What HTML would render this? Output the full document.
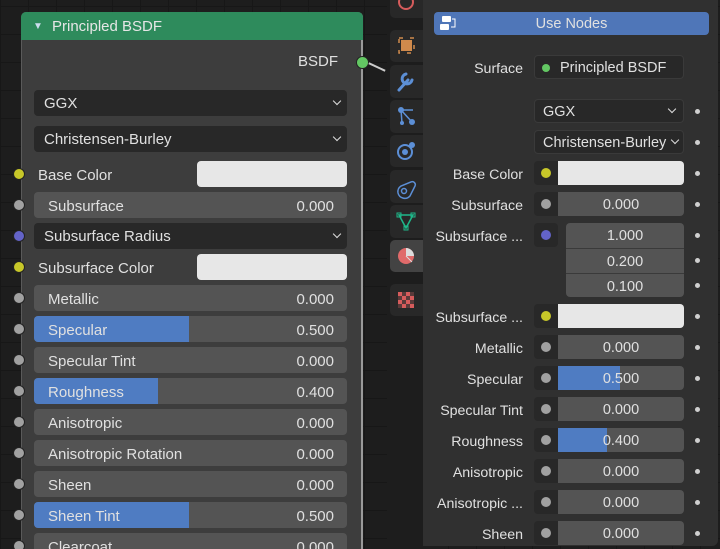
<!DOCTYPE html>
<html style="width:720px;height:549px;overflow:hidden"><head><meta charset="utf-8"><style>
*{box-sizing:border-box;margin:0;padding:0}
body{width:720px;height:549px;overflow:hidden;background:#1d1d1d;font-family:"Liberation Sans","DejaVu Sans",sans-serif;font-size:15px;color:#e0e0e0;position:relative;
background-image:linear-gradient(#171717 1px,transparent 1px),linear-gradient(90deg,#171717 1px,transparent 1px);background-size:28px 28px;background-position:0 6px}
.a{position:absolute}
.node{left:21px;top:12px;width:342px;height:545px;background:#3d3d3d;border-radius:5px;border:1px solid #5a5a5a;border-right:2px solid #9a9a9a}
.hdr{left:21px;top:12px;width:342px;height:28px;background:#2e8b5c;border-radius:5px 5px 0 0;color:#e6e6e6;padding-left:31px;padding-top:2px;line-height:26px;font-size:15px}
.f{position:absolute;left:34px;width:313px;height:26px;line-height:26px;background:#545454;border-radius:4px;overflow:hidden}
.f .bar{position:absolute;left:0;top:0;bottom:0;background:#4f7cc2}
.f .l{position:absolute;left:14px;top:2px}
.f .v{position:absolute;right:13px;top:2px}
.dd{position:absolute;left:34px;width:313px;height:26px;line-height:24px;padding-top:2px;background:#282828;border-radius:4px;padding-left:10px}
.chev{position:absolute;right:7px;top:8px;width:6px;height:6px;border-right:1.5px solid #ddd;border-bottom:1.5px solid #ddd;transform:rotate(45deg)}
.sk{position:absolute;left:13px;width:12px;height:12px;border-radius:50%;border:1px solid #222;background:#a1a1a1}
.strip{left:387px;top:0;width:36px;height:549px;background:#1d1d1d}
.tab{position:absolute;left:390px;width:33px;background:#282828;border-radius:5px 0 0 5px}
.panel{left:423px;top:0;width:295px;height:546px;background:#303030;border-radius:0 0 6px 0}
.lbl{position:absolute;right:197px;text-align:right;font-size:14.2px;white-space:nowrap;line-height:24px;padding-top:2px}
.sb{position:absolute;left:534px;width:24px;height:24px;background:#282828;border-radius:4px 0 0 4px}
.sb i{position:absolute;left:7px;top:7px;width:10px;height:10px;border-radius:50%;background:#a1a1a1}
.pf{position:absolute;left:558px;width:126px;height:24px;line-height:22px;padding-top:2px;background:#545454;border-radius:0 4px 4px 0;overflow:hidden;text-align:center;font-size:14.5px}
.pf .bar{position:absolute;left:0;top:0;bottom:0;background:#4f7cc2}
.pf span{position:relative}
.dot{position:absolute;left:695px;width:5px;height:5px;border-radius:50%;background:#cfcfcf}
.pdd{position:absolute;left:534px;width:150px;height:24px;line-height:20px;padding-top:2px;background:#282828;border-radius:4px;padding-left:8px;font-size:14.5px;border:1px solid #3a3a3a;white-space:nowrap;overflow:hidden}
</style></head><body>
<div class="a node"></div>
<div class="a hdr"><span style="position:absolute;left:12px;top:2px;font-size:10px;color:#cde">▼</span>Principled BSDF</div>
<div class="a" style="left:298px;top:53px">BSDF</div>
<div class="a" style="left:356px;top:56px;width:13px;height:13px;border-radius:50%;background:#63c763;border:1px solid #222"></div>
<div class="a" style="left:368px;top:66px;width:18px;height:2px;background:#ccc;transform:rotate(25deg)"></div>

<div class="dd" style="top:90px">GGX<div class="chev"></div></div>
<div class="dd" style="top:126px">Christensen-Burley<div class="chev"></div></div>
<div class="sk" style="top:168px;background:#c7c729"></div>
<div class="a" style="left:38px;top:163px;line-height:26px">Base Color</div>
<div class="a" style="left:197px;top:161px;width:150px;height:26px;background:#e7e7e7;border-radius:4px"></div>
<div class="sk" style="top:199px"></div><div class="f" style="top:192px"><span class="l">Subsurface</span><span class="v">0.000</span></div>
<div class="sk" style="top:230px;background:#6363c7"></div>
<div class="dd" style="top:223px">Subsurface Radius<div class="chev"></div></div>
<div class="sk" style="top:261px;background:#c7c729"></div>
<div class="a" style="left:38px;top:256px;line-height:26px">Subsurface Color</div>
<div class="a" style="left:197px;top:254px;width:150px;height:26px;background:#e7e7e7;border-radius:4px"></div>
<div class="sk" style="top:292px"></div><div class="f" style="top:285px"><span class="l">Metallic</span><span class="v">0.000</span></div>
<div class="sk" style="top:323px"></div><div class="f" style="top:316px"><div class="bar" style="width:155px"></div><span class="l">Specular</span><span class="v">0.500</span></div>
<div class="sk" style="top:354px"></div><div class="f" style="top:347px"><span class="l">Specular Tint</span><span class="v">0.000</span></div>
<div class="sk" style="top:385px"></div><div class="f" style="top:378px"><div class="bar" style="width:124px"></div><span class="l">Roughness</span><span class="v">0.400</span></div>
<div class="sk" style="top:416px"></div><div class="f" style="top:409px"><span class="l">Anisotropic</span><span class="v">0.000</span></div>
<div class="sk" style="top:447px"></div><div class="f" style="top:440px"><span class="l">Anisotropic Rotation</span><span class="v">0.000</span></div>
<div class="sk" style="top:478px"></div><div class="f" style="top:471px"><span class="l">Sheen</span><span class="v">0.000</span></div>
<div class="sk" style="top:509px"></div><div class="f" style="top:502px"><div class="bar" style="width:155px"></div><span class="l">Sheen Tint</span><span class="v">0.500</span></div>
<div class="sk" style="top:540px"></div><div class="f" style="top:533px"><span class="l">Clearcoat</span><span class="v">0.000</span></div>

<div class="a strip"></div>
<div class="tab" style="top:-5px;height:23px"></div>
<div class="tab" style="top:30px;height:32px"></div>
<div class="tab" style="top:65px;height:33px"></div>
<div class="tab" style="top:100px;height:33px"></div>
<div class="tab" style="top:135px;height:32px"></div>
<div class="tab" style="top:170px;height:33px"></div>
<div class="tab" style="top:205px;height:33px"></div>
<div class="tab" style="top:240px;height:32px;background:#434343"></div>
<div class="tab" style="top:284px;height:32px"></div>
<svg class="a" style="left:390px;top:0" width="33" height="320" viewBox="0 0 33 320" fill="none">
<circle cx="16" cy="2" r="7" stroke="#d65c5c" stroke-width="2"/>
<rect x="9" y="38" width="15" height="15" stroke="#d08a4c" stroke-width="1.5" stroke-dasharray="4 7"/><rect x="11" y="40" width="11" height="11" fill="#d08a4c"/>
<path d="M9 90 L18 80 M16 74 a5 5 0 1 0 6 6" stroke="#5c8fd6" stroke-width="3" stroke-linecap="round"/>
<circle cx="11" cy="110" r="3" fill="#5c8fd6"/><circle cx="12" cy="123" r="2" fill="#5c8fd6"/><circle cx="22" cy="122" r="3" fill="#5c8fd6"/><path d="M11 110 L12 123 M11 110 L22 122 M11 110 L23 110" stroke="#5c8fd6" stroke-width="1.5"/>
<circle cx="15" cy="152" r="7" stroke="#5c8fd6" stroke-width="2"/><circle cx="15" cy="152" r="3" fill="#5c8fd6"/><circle cx="22" cy="145" r="3" fill="#5c8fd6"/>
<path d="M8 193 a7 7 0 0 0 12 3 l5 -10 a3 3 0 0 0 -4 -4 l-10 4 a7 7 0 0 0 -3 7z" stroke="#5c8fd6" stroke-width="1.5"/><circle cx="14" cy="191" r="2.5" stroke="#5c8fd6" stroke-width="1.5"/>
<path d="M9 215 L23 215 L16 228 Z" stroke="#1fb88a" stroke-width="1.5"/><rect x="7" y="213" width="4" height="4" stroke="#1fb88a"/><rect x="21" y="213" width="4" height="4" stroke="#1fb88a"/><rect x="14" y="226" width="4" height="4" stroke="#1fb88a"/>
<circle cx="16" cy="256" r="8" fill="#e06a6a"/><path d="M16 248 V256 H24 A8 8 0 0 0 16 248Z" fill="#ddd"/><path d="M16 256 L22 262" stroke="#ddd" stroke-width="1"/>
<g fill="#d65c5c"><rect x="8" y="292" width="16" height="16" fill="#5a3a3a"/><rect x="8" y="292" width="4" height="4"/><rect x="16" y="292" width="4" height="4"/><rect x="12" y="296" width="4" height="4"/><rect x="20" y="296" width="4" height="4"/><rect x="8" y="300" width="4" height="4"/><rect x="16" y="300" width="4" height="4"/><rect x="12" y="304" width="4" height="4"/><rect x="20" y="304" width="4" height="4"/></g>
</svg>

<div class="a panel"></div>
<div class="a" style="left:434px;top:12px;width:275px;height:23px;line-height:21px;padding-top:2px;background:#4f76b8;border-radius:4px;text-align:center;font-size:14.5px">Use Nodes</div>
<svg class="a" style="left:439px;top:14px" width="18" height="18"><rect x="3" y="2" width="9" height="6" rx="1" fill="#fff"/><rect x="1" y="10" width="9" height="6" rx="1" fill="#fff"/><path d="M13 5 h3 v8 h-4" stroke="#fff" fill="none"/></svg>

<div class="lbl" style="top:55px">Surface</div>
<div class="pdd" style="top:55px;padding-left:25px">Principled BSDF</div>
<div class="a" style="left:542px;top:64px;width:8px;height:8px;border-radius:50%;background:#63c763"></div>
<div class="pdd" style="top:99px">GGX<div class="chev" style="right:8px;top:6px"></div></div><div class="dot" style="top:109px"></div>
<div class="pdd" style="top:130px">Christensen-Burley<div class="chev" style="right:5px;top:6px"></div></div><div class="dot" style="top:140px"></div>

<div class="lbl" style="top:161px">Base Color</div><div class="sb" style="top:161px"><i style="background:#c7c729"></i></div><div class="a" style="left:558px;top:161px;width:126px;height:24px;background:#e7e7e7;border-radius:0 4px 4px 0"></div><div class="dot" style="top:171px"></div>
<div class="lbl" style="top:192px">Subsurface</div><div class="sb" style="top:192px"><i></i></div><div class="pf" style="top:192px"><span>0.000</span></div><div class="dot" style="top:202px"></div>
<div class="lbl" style="top:223px">Subsurface ...</div><div class="sb" style="top:223px;border-radius:4px"><i style="background:#6363c7"></i></div>
<div class="pf" style="left:566px;width:118px;top:223px;height:25px;border-radius:4px 4px 0 0"><span>1.000</span></div>
<div class="pf" style="left:566px;width:118px;top:248px;height:25px;border-radius:0;border-top:1px solid #3a3a3a"><span>0.200</span></div>
<div class="pf" style="left:566px;width:118px;top:273px;height:24px;border-radius:0 0 4px 4px;border-top:1px solid #3a3a3a"><span>0.100</span></div>
<div class="dot" style="top:233px"></div><div class="dot" style="top:258px"></div><div class="dot" style="top:283px"></div>
<div class="lbl" style="top:304px">Subsurface ...</div><div class="sb" style="top:304px"><i style="background:#c7c729"></i></div><div class="a" style="left:558px;top:304px;width:126px;height:24px;background:#e7e7e7;border-radius:0 4px 4px 0"></div><div class="dot" style="top:314px"></div>
<div class="lbl" style="top:335px">Metallic</div><div class="sb" style="top:335px"><i></i></div><div class="pf" style="top:335px"><span>0.000</span></div><div class="dot" style="top:345px"></div>
<div class="lbl" style="top:366px">Specular</div><div class="sb" style="top:366px"><i></i></div><div class="pf" style="top:366px"><div class="bar" style="width:62px"></div><span>0.500</span></div><div class="dot" style="top:376px"></div>
<div class="lbl" style="top:397px">Specular Tint</div><div class="sb" style="top:397px"><i></i></div><div class="pf" style="top:397px"><span>0.000</span></div><div class="dot" style="top:407px"></div>
<div class="lbl" style="top:428px">Roughness</div><div class="sb" style="top:428px"><i></i></div><div class="pf" style="top:428px"><div class="bar" style="width:49px"></div><span>0.400</span></div><div class="dot" style="top:438px"></div>
<div class="lbl" style="top:459px">Anisotropic</div><div class="sb" style="top:459px"><i></i></div><div class="pf" style="top:459px"><span>0.000</span></div><div class="dot" style="top:469px"></div>
<div class="lbl" style="top:490px">Anisotropic ...</div><div class="sb" style="top:490px"><i></i></div><div class="pf" style="top:490px"><span>0.000</span></div><div class="dot" style="top:500px"></div>
<div class="lbl" style="top:521px">Sheen</div><div class="sb" style="top:521px"><i></i></div><div class="pf" style="top:521px"><span>0.000</span></div><div class="dot" style="top:531px"></div>
</body></html>
